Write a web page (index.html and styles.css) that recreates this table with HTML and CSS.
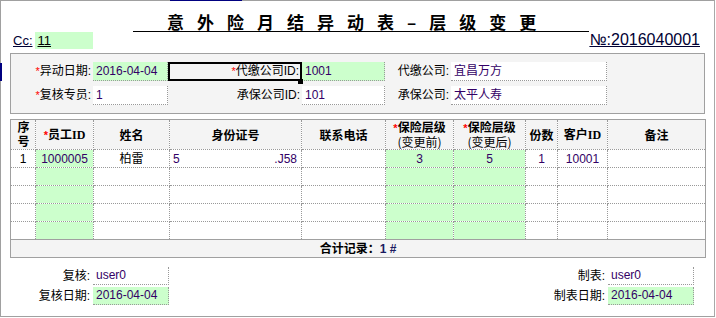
FILE: index.html
```html
<!DOCTYPE html>
<html lang="zh">
<head>
<meta charset="utf-8">
<title>意外险月结异动表–层级变更</title>
<link rel="stylesheet" href="styles.css">
</head>
<body>
<div class="sheet">
  <i class="mark mark-top"></i><i class="mark mark-left"></i>
  <h1 class="title">意外险月结异动表–层级变更</h1>
  <div class="subhead">
    <div class="cc"><span class="cc-label">Cc:</span><span class="cc-value">11</span></div>
    <div class="docno">№:2016040001</div>
  </div>

  <div class="panel">
    <div class="lbl"><span class="req">*</span>异动日期:</div>
    <div class="val green">2016-04-04</div>
    <div class="lbl focus"><span class="req">*</span>代缴公司ID:</div>
    <div class="val green">1001</div>
    <div class="lbl">代缴公司:</div>
    <div class="val">宜昌万方</div>

    <div class="lbl"><span class="req">*</span>复核专员:</div>
    <div class="val">1</div>
    <div class="lbl">承保公司ID:</div>
    <div class="val">101</div>
    <div class="lbl">承保公司:</div>
    <div class="val">太平人寿</div>
  </div>

  <table class="grid">
    <colgroup>
      <col class="w-no"><col class="w-emp"><col class="w-name"><col class="w-id"><col class="w-tel">
      <col class="w-lv1"><col class="w-lv2"><col class="w-qty"><col class="w-cust"><col class="w-note">
    </colgroup>
    <thead>
      <tr class="hrow">
        <th><span class="vert">序号</span></th>
        <th><span class="req">*</span>员工<span class="ser">ID</span></th>
        <th>姓名</th>
        <th>身份证号</th>
        <th>联系电话</th>
        <th><span class="req">*</span>保险层级<br><span class="sub">(变更前)</span></th>
        <th><span class="req">*</span>保险层级<br><span class="sub">(变更后)</span></th>
        <th>份数</th>
        <th>客户<span class="ser">ID</span></th>
        <th>备注</th>
      </tr>
    </thead>
    <tbody>
      <tr class="drow">
        <td>1</td><td class="g v">1000005</td><td>柏雷</td>
        <td><div class="split"><span>5</span><span>.J58</span></div></td>
        <td></td><td class="g v">3</td><td class="g v">5</td><td class="v">1</td><td class="v">10001</td><td></td>
      </tr>
      <tr class="drow"><td></td><td class="g"></td><td></td><td></td><td></td><td class="g"></td><td class="g"></td><td></td><td></td><td></td></tr>
      <tr class="drow"><td></td><td class="g"></td><td></td><td></td><td></td><td class="g"></td><td class="g"></td><td></td><td></td><td></td></tr>
      <tr class="drow"><td></td><td class="g"></td><td></td><td></td><td></td><td class="g"></td><td class="g"></td><td></td><td></td><td></td></tr>
      <tr class="drow"><td></td><td class="g"></td><td></td><td></td><td></td><td class="g"></td><td class="g"></td><td></td><td></td><td></td></tr>
      <tr class="srow"><td colspan="10">合计记录：<span class="cnt">1 #</span></td></tr>
    </tbody>
  </table>

  <div class="footer">
    <div class="fblock left">
      <div class="flbl">复核:</div><div class="val">user0</div>
      <div class="flbl">复核日期:</div><div class="val green">2016-04-04</div>
    </div>
    <div class="fblock right">
      <div class="flbl">制表:</div><div class="val">user0</div>
      <div class="flbl">制表日期:</div><div class="val green">2016-04-04</div>
    </div>
  </div>
</div>
</body>
</html>
```
FILE: styles.css
```css
body {
  margin: 0;
  background: #fff;
  color: #000;
  font-family: "Liberation Sans", "Noto Sans CJK SC", sans-serif;
  font-size: 12px;
}

.sheet {
  position: relative;
  width: 715px;
  height: 317px;
  box-sizing: border-box;
  border: 1px solid #a0a0a0;
  border-right-color: #a8a8a8;
}

.mark {
  position: absolute;
  background: #000080;
}
.mark-top { top: -1px; left: 169px; width: 72px; height: 1px; }
.mark-left { top: 62px; left: -1px; width: 2px; height: 18px; }

.title {
  margin: 12px 0 0 132px;
  width: 456px;
  box-sizing: border-box;
  padding-left: 34px;
  font-size: 17px;
  line-height: 18px;
  font-weight: bold;
  letter-spacing: 13px;
  white-space: nowrap;
  border-bottom: 1px solid #000;
  font-family: "Noto Sans CJK SC", sans-serif;
}

.subhead {
  display: flex;
  justify-content: space-between;
  align-items: baseline;
  height: 17px;
  margin-top: -1px;
}
.cc {
  margin-left: 12px;
  font-size: 13px;
  line-height: 17px;
  display: flex;
  align-items: baseline;
}
.cc-label { text-decoration: underline; color: #000033; }
.cc-value {
  display: inline-block;
  width: 58px;
  box-sizing: border-box;
  margin-left: 2px;
  padding-left: 3px;
  background: #ccffcc;
  text-decoration: underline;
}
.docno {
  margin-right: 14px;
  font-size: 16px;
  line-height: 17px;
  text-decoration: underline;
  color: #000033;
}

.panel {
  margin: 5px 0 0 9px;
  width: 695px;
  box-sizing: border-box;
  border: 1px solid #a0a0a0;
  background: #f4f4f4;
  padding: 8px 0 8px 0;
  display: grid;
  grid-template-columns: 82px 75px 134px 83px 66px 156px;
  grid-auto-rows: 19px;
  row-gap: 5px;
}
.lbl {
  text-align: right;
  padding-right: 2px;
  line-height: 19px;
  white-space: nowrap;
}
.focus {
  position: relative;
  outline: 2px solid #000;
  outline-offset: -2px;
  padding-right: 3px;
}
.focus::after {
  content: "";
  position: absolute;
  right: -1px;
  bottom: -3px;
  width: 5px;
  height: 5px;
  background: #000;
}
.req {
  color: #ff0000;
  font-size: 11px;
}
.val {
  box-sizing: border-box;
  background: #fff;
  border-right: 1px dotted #999;
  border-bottom: 1px dotted #999;
  padding-left: 3px;
  line-height: 18px;
  color: #330066;
  white-space: nowrap;
}
.val.green { background: #ccffcc; }

.grid {
  margin: 5px 0 0 9px;
  width: 695px;
  table-layout: fixed;
  border-collapse: collapse;
  border: 1px solid #a0a0a0;
}
.w-no { width: 25px; }
.w-emp { width: 58px; }
.w-name { width: 76px; }
.w-id { width: 132px; }
.w-tel { width: 84px; }
.w-lv1 { width: 68px; }
.w-lv2 { width: 72px; }
.w-qty { width: 32px; }
.w-cust { width: 50px; }
.w-note { width: 98px; }

.grid th, .grid td {
  border: 1px dotted #999;
  padding: 0;
  text-align: center;
  vertical-align: middle;
  white-space: nowrap;
  overflow: hidden;
}
.grid th {
  background: #f4f4f4;
  font-weight: bold;
  line-height: 14px;
  font-family: "Noto Sans CJK SC", sans-serif;
}
.vert {
  display: inline-block;
  writing-mode: vertical-rl;
  letter-spacing: 2px;
  line-height: 12px;
  vertical-align: middle;
}
.grid th .sub { font-weight: normal; }
.grid th .req { font-family: "Liberation Sans", sans-serif; }
.ser { font-family: "Liberation Serif", serif; font-weight: bold; }
.hrow { height: 30px; }
.drow { height: 18px; }
.drow td { line-height: 16px; }
.grid td.g { background: #ccffcc; }
.grid td.v { color: #330066; }
.split {
  display: flex;
  justify-content: space-between;
  padding: 0 4px 0 3px;
  color: #330066;
}
.srow { height: 18px; }
.srow td {
  background: #f4f4f4;
  font-weight: bold;
  line-height: 16px;
  border: 1px solid #a0a0a0;
}
.cnt { color: #1a1a60; }

.footer {
  display: flex;
  justify-content: space-between;
  margin-top: 9px;
  padding: 0 20px 0 10px;
}
.fblock {
  display: grid;
  grid-auto-rows: 18px;
  row-gap: 2px;
}
.fblock.left { grid-template-columns: 82px 76px; }
.fblock.right { grid-template-columns: auto 86px; }
.flbl {
  text-align: right;
  padding-right: 3px;
  line-height: 18px;
  white-space: nowrap;
}
.fblock .val { line-height: 17px; }
```
